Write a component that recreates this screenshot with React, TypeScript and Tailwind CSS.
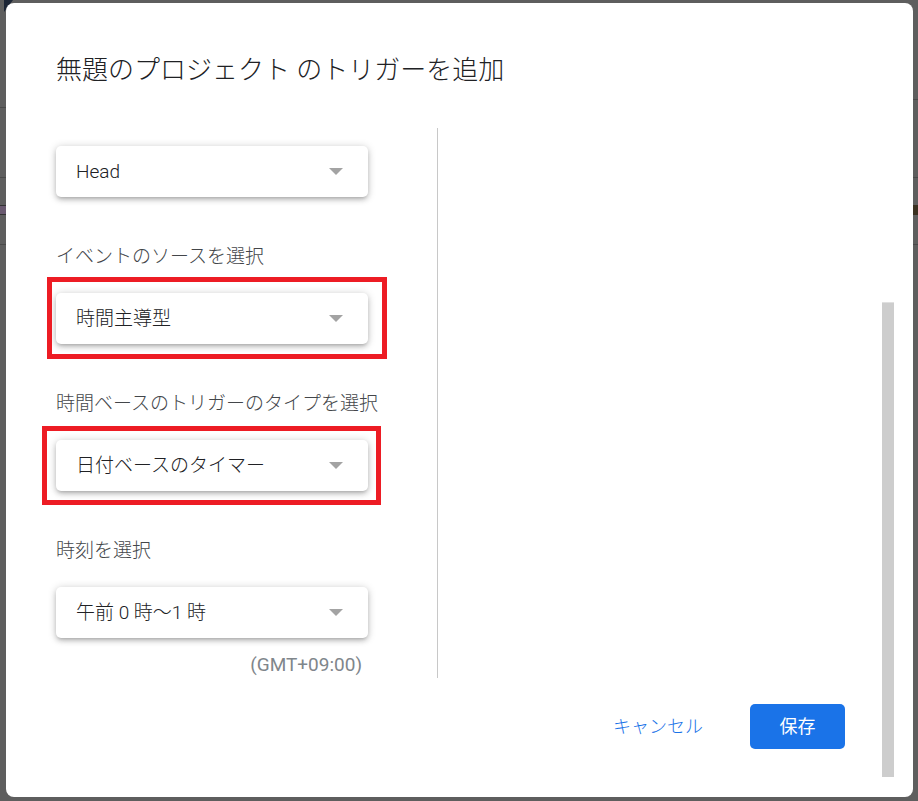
import React from "react";

const FONT = 'Roboto, "Noto Sans CJK JP", sans-serif';

function Arrow() {
  return (
    <svg width="14" height="7" viewBox="0 0 14 7" className="shrink-0">
      <polygon points="0,0 14,0 7,7" fill="#a3a3a3" />
    </svg>
  );
}

function Select({ text }: { text: string }) {
  return (
    <div className="flex items-center justify-between w-[312px] h-[51px] bg-white rounded-[5px] pl-[20px] pr-[25px] shadow-[0_3px_5px_0_rgba(0,0,0,0.14),0_3px_3px_-2px_rgba(0,0,0,0.12),0_1px_8px_0_rgba(0,0,0,0.2)]">
      <span className="text-[19px] leading-[24px] font-light text-[#202124]">{text}</span>
      <Arrow />
    </div>
  );
}

function Label({ text }: { text: string }) {
  return <div className="text-[19px] leading-[24px] font-light text-[#43464a] whitespace-nowrap">{text}</div>;
}

export default function App() {
  return (
    <div className="relative w-[918px] h-[801px] bg-[#5e5e5e] overflow-hidden" style={{ fontFamily: FONT }}>
      {/* background page edges */}
      <div className="flex justify-between h-full">
        <div className="w-[6px] flex flex-col">
          <div className="h-[108px] border-b border-[#4a4a4a]" />
          <div className="h-[70px] border-b border-[#4a4a4a]" />
          <div className="h-[27px]" />
          <div className="h-[10px] border-y border-[#333] bg-[#6a5a70]" />
          <div className="h-[30px] border-b border-[#4a4a4a]" />
        </div>
        <div className="w-[5px] flex flex-col">
          <div className="h-[100px] border-b border-[#4a4a4a]" />
          <div className="h-[78px] border-b border-[#4a4a4a]" />
          <div className="h-[27px]" />
          <div className="h-[10px] bg-[#3a3020]" />
          <div className="h-[30px] border-b border-[#4a4a4a]" />
        </div>
      </div>
      <svg className="absolute left-[4px] top-0" width="9" height="12" viewBox="0 0 9 12">
        <polygon points="0,0 9,0 0,12" fill="#1d2636" />
      </svg>

      {/* dialog */}
      <div className="absolute left-[6px] top-[3px] w-[907px] h-[794px] bg-white rounded-[8px] flex">
        <div className="flex-1 flex flex-col">
          <div className="pt-[51px] pl-[50px] text-[26px] leading-[32px] font-light text-[#202124] whitespace-nowrap">
            無題のプロジェクト のトリガーを追加
          </div>
          <div className="mt-[42px] h-[550px] flex">
            <div className="w-[432px] border-r border-[#c8c8c8] pl-[50px] pt-[18px] flex flex-col">
              <Select text="Head" />
              <div className="mt-[48px]">
                <Label text="イベントのソースを選択" />
                <div className="relative mt-[24px] w-[312px]">
                  <div className="absolute left-[-9px] top-[-16px] right-[-19px] bottom-[-15px] border-[5px] border-[#ed1c24]" />
                  <Select text="時間主導型" />
                </div>
              </div>
              <div className="mt-[48px]">
                <Label text="時間ベースのトリガーのタイプを選択" />
                <div className="relative mt-[24px] w-[312px]">
                  <div className="absolute left-[-14px] top-[-14px] right-[-13px] bottom-[-14px] border-[5px] border-[#ed1c24]" />
                  <Select text="日付ベースのタイマー" />
                </div>
              </div>
              <div className="mt-[48px]">
                <Label text="時刻を選択" />
                <div className="mt-[24px]">
                  <Select text="午前 0 時〜1 時" />
                </div>
                <div className="w-[306px] mt-[16px] text-right text-[19px] leading-[22px] text-[#80868b]">(GMT+09:00)</div>
              </div>
            </div>
            <div className="flex-1" />
          </div>
          <div className="mt-[26px] flex justify-end items-center pr-[37px]">
            <button className="text-[18px] leading-[24px] font-light text-[#1a73e8] mr-[47px]">キャンセル</button>
            <button className="w-[95px] h-[45px] rounded-[5px] bg-[#1a73e8] text-white text-[18px] leading-[24px]">保存</button>
          </div>
        </div>
        <div className="w-[12px] mr-[19px] pt-[299px] pb-[20px] flex flex-col">
          <div className="flex-1 bg-[#cdcdcd] border-t border-[#e0e0e0]" />
        </div>
      </div>
    </div>
  );
}
